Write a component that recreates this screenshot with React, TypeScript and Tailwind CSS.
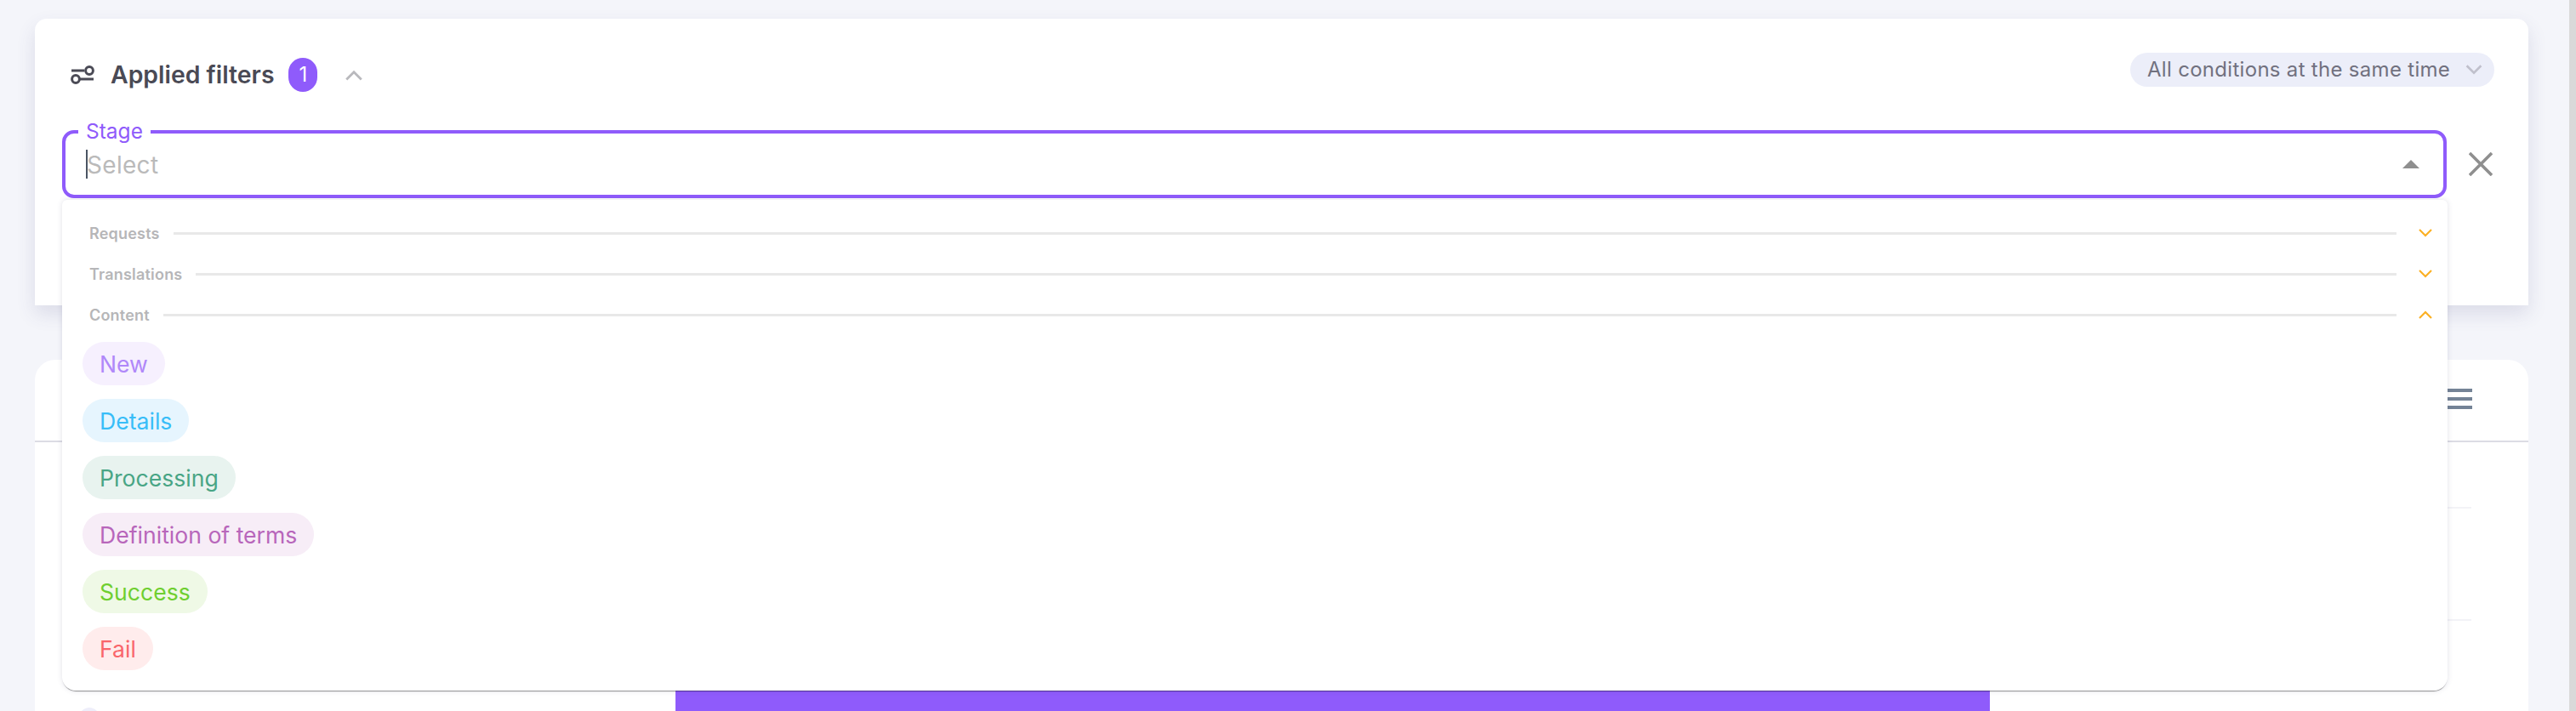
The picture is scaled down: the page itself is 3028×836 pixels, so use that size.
import React from "react";

const pills = [
  { label: "New", cls: "bg-[#f6f0fe] text-[#b088f9]" },
  { label: "Details", cls: "bg-[#e6f5fe] text-[#38bdf8]" },
  { label: "Processing", cls: "bg-[#e8f3ef] text-[#48a585]" },
  { label: "Definition of terms", cls: "bg-[#f7edf7] text-[#b866bb]" },
  { label: "Success", cls: "bg-[#eff9e6] text-[#6fcf30]" },
  { label: "Fail", cls: "bg-[#ffecec] text-[#f9666b]" },
];

const sections = [
  { label: "Requests", up: false },
  { label: "Translations", up: false },
  { label: "Content", up: true },
];

function Chevron({ up, className }: { up?: boolean; className: string }) {
  return (
    <svg viewBox="0 0 16 10" fill="none" className={className}>
      <path
        d={up ? "M1 9L8 2l7 7" : "M1 1l7 7 7-7"}
        stroke="currentColor"
        strokeWidth="2.2"
      />
    </svg>
  );
}

export default function App() {
  return (
    <div className="flex h-[836px] w-full overflow-hidden bg-[#f4f5fa] font-['Inter',sans-serif]">
      <div className="min-w-0 flex-1 pl-[41px] pr-[48px] pt-[22px]">
        {/* Filters card */}
        <div className="relative z-10 h-[337px] rounded-t-[14px] bg-white pl-[32px] pr-[40px] pt-[40px] shadow-[0_10px_22px_rgba(70,70,130,0.14)]">
          <div className="flex h-[46px] items-start justify-between">
            <div className="mt-[6px] flex items-center pl-[10px]">
              <svg viewBox="0 0 28 24" fill="none" className="h-[24px] w-[28px] text-[#4a4a55]">
                <path d="M1 7h15M11 17h16" stroke="currentColor" strokeWidth="3" />
                <circle cx="22" cy="7" r="4.4" stroke="currentColor" strokeWidth="3" />
                <circle cx="6" cy="17" r="4.4" stroke="currentColor" strokeWidth="3" />
              </svg>
              <span className="ml-[19px] text-[28.4px] leading-[40px] font-semibold text-[#4a4a55]">Applied filters</span>
              <span className="ml-[17px] flex h-[40px] w-[34px] items-center justify-center rounded-full bg-[#8f5bfb] text-[24px] text-white">1</span>
              <Chevron up className="ml-[33px] h-[13px] w-[20px] text-[#b9b9bd]" />
            </div>
            <div className="flex h-[40px] w-[428px] items-center rounded-full bg-[#eceef9] pl-[20px] text-[24px] tracking-[0.3px] text-[#71717f]">
              <span className="whitespace-nowrap">All conditions at the same time</span>
              <Chevron className="ml-auto mr-[14px] h-[12px] w-[20px] text-[#c0c0cc]" />
            </div>
          </div>
          <div className="mt-[45px] flex items-center">
            <div className="relative h-[80px] flex-1">
              <div className="flex h-full items-center rounded-[14px] border-[4px] border-[#8f5bfb] pl-[24px] pr-[28px]">
                <span className="h-[34px] border-l-2 border-[#4b5563]" />
                <span className="pt-[2px] text-[28px] leading-none tracking-[0.3px] text-[#bababa] -ml-[1px]">Select</span>
                <svg viewBox="0 0 20 10" className="ml-auto h-[10px] w-[20px] text-[#8f8f8f]">
                  <path d="M10 0l10 10H0z" fill="currentColor" />
                </svg>
              </div>
              <span className="absolute left-[19px] top-[-16px] bg-white px-[9px] text-[24.5px] leading-[34px] text-[#8f5bfb]">Stage</span>

              {/* Open dropdown */}
              <div className="absolute left-0 right-[-1px] top-[82px] h-[577px] rounded-b-[16px] rounded-t-[6px] bg-white pb-[24px] pt-[15px] shadow-[0_2px_1px_-1px_rgba(0,0,0,0.4),0_0_6px_rgba(70,70,110,0.16)]">
                {sections.map((s) => (
                  <div key={s.label} className="flex h-[48px] items-center pl-[32px] pr-[18px]">
                    <span className="text-[18px] font-semibold tracking-[0.2px] text-[#b6b6b8]">{s.label}</span>
                    <span className="mx-[16px] h-[3px] flex-1 bg-[#e8e8e8]" />
                    <Chevron up={s.up} className="ml-[10px] h-[10px] w-[16px] text-[#fbb024]" />
                  </div>
                ))}
                <div className="mt-[8px] flex flex-col items-start gap-[16px] pl-[24px]">
                  {pills.map((p) => (
                    <span key={p.label} className={`flex h-[51px] items-center rounded-full px-[20px] pt-[2px] text-[26.6px] ${p.cls}`}>
                      {p.label}
                    </span>
                  ))}
                </div>
              </div>
            </div>
            <svg viewBox="0 0 28 28" fill="none" className="ml-[26px] mr-[2px] h-[28px] w-[28px] text-[#8f8f8f]">
              <path d="M1 1l26 26M27 1L1 27" stroke="currentColor" strokeWidth="3.6" />
            </svg>
          </div>
        </div>

        {/* Card behind the dropdown */}
        <div className="mt-[64px] h-[500px] rounded-t-[24px] bg-white">
          <div className="flex h-[97px] items-center justify-end border-b-[2px] border-[#dcdce4] pb-[4px] pr-[66px]">
            <div className="flex w-[34px] flex-col gap-[6px]">
              <span className="h-[4px] bg-[#748396]" />
              <span className="h-[4px] bg-[#748396]" />
              <span className="h-[4px] bg-[#748396]" />
            </div>
          </div>
          <div className="ml-[60px] mr-[67px] h-[78px] border-b-2 border-[#f3f3f7]" />
          <div className="ml-[60px] mr-[67px] h-[132px] border-b-2 border-[#f3f3f7]" />
          <div className="mt-[81px] flex items-start pl-[52px]">
            <span className="mt-[21px] h-[24px] w-[24px] rounded-full bg-[#eeeefa]" />
            <div className="ml-[677px] h-[40px] w-[1545px] bg-[#8f5bfb]" />
          </div>
        </div>
      </div>
      <div className="w-[8px] shrink-0 bg-[#d9d9d9]" />
    </div>
  );
}
